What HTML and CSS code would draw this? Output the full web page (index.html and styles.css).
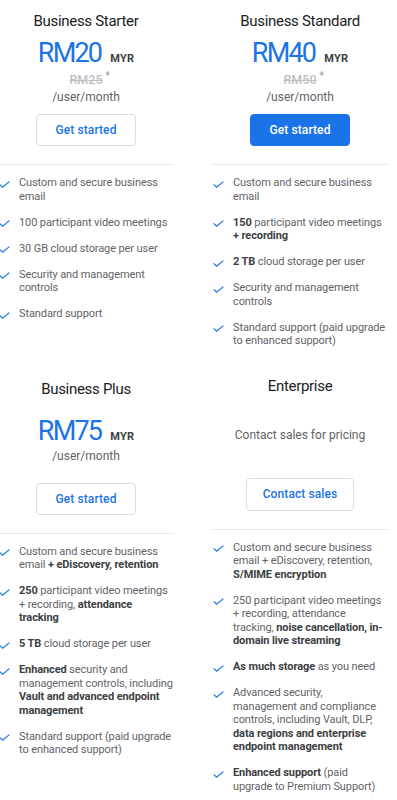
FILE: index.html
```html
<!DOCTYPE html>
<html lang="en">
<head>
<meta charset="utf-8">
<title>Google Workspace plans</title>
<link rel="stylesheet" href="styles.css">
</head>
<body>
<main class="plans">
  <section class="plan">
    <header class="plan-head">
      <h2 class="plan-title">Business Starter</h2>
      <div class="price"><span class="amount">RM20</span><span class="currency">MYR</span></div>
      <div class="was"><s>RM25</s><span class="star">*</span></div>
      <div class="per">/user/month</div>
      <a class="btn" href="#">Get started</a>
    </header>
    <ul class="features">
      <li>Custom and secure business email</li>
      <li>100 participant video meetings</li>
      <li>30 GB cloud storage per user</li>
      <li>Security and management controls</li>
      <li>Standard support</li>
    </ul>
  </section>

  <section class="plan">
    <header class="plan-head">
      <h2 class="plan-title">Business Standard</h2>
      <div class="price"><span class="amount">RM40</span><span class="currency">MYR</span></div>
      <div class="was"><s>RM50</s><span class="star">*</span></div>
      <div class="per">/user/month</div>
      <a class="btn btn-primary" href="#">Get started</a>
    </header>
    <ul class="features">
      <li>Custom and secure business email</li>
      <li><b>150</b> participant video meetings <b>+ recording</b></li>
      <li><b>2 TB</b> cloud storage per user</li>
      <li>Security and management controls</li>
      <li>Standard support (paid upgrade to enhanced support)</li>
    </ul>
  </section>

  <section class="plan plan-plus">
    <header class="plan-head">
      <h2 class="plan-title">Business Plus</h2>
      <div class="price price-plus"><span class="amount">RM75</span><span class="currency">MYR</span></div>
      <div class="per">/user/month</div>
      <a class="btn btn-plus" href="#">Get started</a>
    </header>
    <ul class="features">
      <li>Custom and secure business email <b>+ eDiscovery, retention</b></li>
      <li><b>250</b> participant video meetings + recording, <b>attendance</b> <b>tracking</b></li>
      <li><b>5 TB</b> cloud storage per user</li>
      <li><b>Enhanced</b> security and management controls, including <b>Vault and advanced endpoint</b> <b>management</b></li>
      <li>Standard support (paid upgrade to enhanced support)</li>
    </ul>
  </section>

  <section class="plan plan-ent">
    <header class="plan-head">
      <h2 class="plan-title">Enterprise</h2>
      <div class="contact-note">Contact sales for pricing</div>
      <a class="btn btn-contact" href="#">Contact sales</a>
    </header>
    <ul class="features">
      <li>Custom and secure business email + eDiscovery, retention, <b>S/MIME encryption</b></li>
      <li>250 participant video meetings + recording, attendance tracking, <b>noise cancellation, in-</b><b>domain live streaming</b></li>
      <li><b>As much storage</b> as you need</li>
      <li>Advanced security, management and compliance controls, including Vault, DLP, <b>data regions and enterprise</b> <b>endpoint management</b></li>
      <li><b>Enhanced support</b> (paid upgrade to Premium Support)</li>
    </ul>
  </section>
</main>
</body>
</html>
```

FILE: styles.css
```css
* { box-sizing: border-box; }

html, body {
  margin: 0;
  padding: 0;
  background: #ffffff;
}

body {
  font-family: Roboto, "Liberation Sans", Arial, sans-serif;
  color: #5f6368;
  overflow: hidden;
}

.plans {
  display: grid;
  grid-template-columns: 176px 176px;
  column-gap: 38px;
  row-gap: 17px;
  align-items: start;
  margin-left: -2px;
}

.plan {
  display: flex;
  flex-direction: column;
}

.plan-head {
  display: flex;
  flex-direction: column;
  align-items: center;
  padding: 9px 0 18px;
  border-bottom: 1px solid #e8eaed;
}

.plan-plus .plan-head { padding-top: 12px; }

.plan-title {
  margin: 0;
  font-size: 15px;
  line-height: 24px;
  font-weight: 400;
  letter-spacing: -0.3px;
  color: #202124;
}

.price {
  display: flex;
  align-items: baseline;
  gap: 8px;
  margin-top: 4px;
  height: 32px;
  line-height: 32px;
}

.price-plus { margin-top: 14px; }

.amount {
  font-size: 27px;
  letter-spacing: -1.8px;
  margin-right: 1px;
  color: #1a73e8;
}

.currency {
  font-size: 11px;
  font-weight: 700;
  letter-spacing: 0.2px;
  color: #3c4043;
}

.was {
  position: relative;
  margin-top: 3px;
  font-size: 12.5px;
  line-height: 16px;
  font-weight: 500;
  color: #bdc1c6;
}

.was s { text-decoration-thickness: 1px; }

.star {
  position: absolute;
  left: 100%;
  top: -4px;
  margin-left: 3px;
  font-size: 10px;
  color: #9aa0a6;
}

.per {
  margin-top: 1px;
  font-size: 12px;
  line-height: 16px;
  color: #5f6368;
}

.btn {
  display: flex;
  align-items: center;
  justify-content: center;
  width: 100px;
  height: 32px;
  margin-top: 9px;
  border: 1px solid #dadce0;
  border-radius: 4px;
  font-size: 12px;
  font-weight: 500;
  letter-spacing: 0.1px;
  color: #1a73e8;
  text-decoration: none;
  background: #ffffff;
}

.btn-primary {
  background: #1a73e8;
  border-color: #1a73e8;
  color: #ffffff;
}

.btn-plus { margin-top: 19px; }

.contact-note {
  margin-top: 29px;
  font-size: 12px;
  line-height: 16px;
  color: #5f6368;
}

.btn-contact {
  width: 108px;
  height: 33px;
  margin-top: 35px;
}

.features {
  list-style: none;
  margin: 0;
  padding: 11px 0 0;
  display: flex;
  flex-direction: column;
  gap: 12.5px;
}

.features li {
  position: relative;
  padding-left: 21px;
  font-size: 11px;
  line-height: 13.5px;
  letter-spacing: -0.1px;
  color: #5f6368;
}

.features li::before {
  content: "";
  position: absolute;
  left: 1px;
  top: 4.5px;
  width: 11px;
  height: 7px;
  background: url("data:image/svg+xml;utf8,<svg xmlns='http://www.w3.org/2000/svg' viewBox='0 0 11 7'><path d='M0.6 3.4 L3.6 6.2 L10.4 0.6' fill='none' stroke='%231a73e8' stroke-width='1.2'/></svg>") no-repeat center / contain;
}

.features b {
  font-weight: 700;
  color: #3c4043;
}
```
